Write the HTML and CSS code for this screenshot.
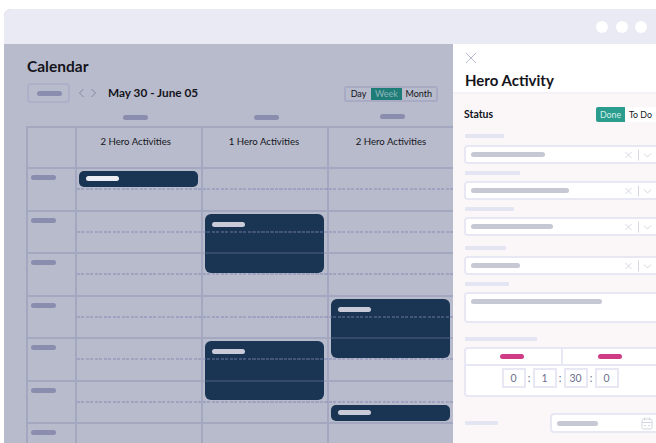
FILE: index.html
```html
<!DOCTYPE html>
<html lang="en">
<head>
<meta charset="utf-8">
<title>Calendar</title>
<link rel="stylesheet" href="styles.css">
</head>
<body>
<div class="window">
  <header class="titlebar">
    <span class="dot"></span><span class="dot"></span><span class="dot"></span>
  </header>
  <div class="workspace">
    <main class="calendar">
      <h1 class="cal-title">Calendar</h1>
      <div class="toolbar">
        <button class="today"><span class="pill pill-muted"></span></button>
        <svg class="nav" width="17" height="10" viewBox="0 0 17 10"><path d="M4.500 1 .5 5l4 4M12.500 1l4 4-4 4" /></svg>
        <span class="range">May 30 - June 05</span>
        <div class="views">
          <span class="view view-day">Day</span><span class="view view-week">Week</span><span class="view view-month">Month</span>
        </div>
      </div>
      <div class="day-tabs">
        <span class="day-tab tab-a"><span class="pill pill-muted"></span></span>
        <span class="day-tab tab-b"><span class="pill pill-muted"></span></span>
        <span class="day-tab tab-c"><span class="pill pill-muted"></span></span>
      </div>
      <div class="grid">
        <div class="cell head"></div>
        <div class="cell head day-a">2 Hero Activities</div>
        <div class="cell head day-b">1 Hero Activities</div>
        <div class="cell head">2 Hero Activities</div>

        <div class="cell hour"><span class="pill pill-muted"></span></div>
        <div class="cell slot"><div class="event ev-short"><span class="pill pill-event pill-bright"></span></div></div>
        <div class="cell slot"></div>
        <div class="cell slot"></div>

        <div class="cell hour"><span class="pill pill-muted"></span></div>
        <div class="cell slot"></div>
        <div class="cell slot"><div class="event ev-long"><span class="pill pill-event"></span></div></div>
        <div class="cell slot"></div>

        <div class="cell hour"><span class="pill pill-muted"></span></div>
        <div class="cell slot"></div>
        <div class="cell slot"></div>
        <div class="cell slot"></div>

        <div class="cell hour"><span class="pill pill-muted"></span></div>
        <div class="cell slot"></div>
        <div class="cell slot"></div>
        <div class="cell slot"><div class="event ev-long"><span class="pill pill-event"></span></div></div>

        <div class="cell hour"><span class="pill pill-muted"></span></div>
        <div class="cell slot"></div>
        <div class="cell slot"><div class="event ev-long"><span class="pill pill-event"></span></div></div>
        <div class="cell slot"></div>

        <div class="cell hour"><span class="pill pill-muted"></span></div>
        <div class="cell slot"></div>
        <div class="cell slot"></div>
        <div class="cell slot"><div class="event ev-short ev-late"><span class="pill pill-event"></span></div></div>

        <div class="cell hour"><span class="pill pill-muted"></span></div>
        <div class="cell slot"></div>
        <div class="cell slot"></div>
        <div class="cell slot"></div>
      </div>
    </main>

    <aside class="panel">
      <div class="panel-head">
        <svg class="close" width="12" height="12" viewBox="0 0 12 12"><path d="M1 1l10 10M11 1 1 11" /></svg>
        <h2 class="panel-title">Hero Activity</h2>
      </div>
      <div class="panel-body">
        <div class="status">
          <span class="status-label">Status</span>
          <div class="toggle"><span class="toggle-on">Done</span><span class="toggle-off">To Do</span></div>
        </div>

        <span class="label w-39"></span>
        <div class="field">
          <span class="pill pill-field w-74"></span>
          <svg class="controls" width="30" height="12" viewBox="0 0 30 12"><path d="M.5 3l6 6M6.500 3l-6 6" /><path class="sep" d="M13.500 .5v11" /><path d="M19 4.500l3.500 3.500L26 4.500" /></svg>
        </div>

        <span class="label w-55 gap-s"></span>
        <div class="field field-tight">
          <span class="pill pill-field w-98"></span>
          <svg class="controls" width="30" height="12" viewBox="0 0 30 12"><path d="M.5 3l6 6M6.500 3l-6 6" /><path class="sep" d="M13.500 .5v11" /><path d="M19 4.500l3.500 3.500L26 4.500" /></svg>
        </div>

        <span class="label w-49 gap-s"></span>
        <div class="field field-tight">
          <span class="pill pill-field w-82"></span>
          <svg class="controls" width="30" height="12" viewBox="0 0 30 12"><path d="M.5 3l6 6M6.500 3l-6 6" /><path class="sep" d="M13.500 .5v11" /><path d="M19 4.500l3.500 3.500L26 4.500" /></svg>
        </div>

        <span class="label w-41 gap-m"></span>
        <div class="field field-tight">
          <span class="pill pill-field w-49"></span>
          <svg class="controls" width="30" height="12" viewBox="0 0 30 12"><path d="M.5 3l6 6M6.500 3l-6 6" /><path class="sep" d="M13.500 .5v11" /><path d="M19 4.500l3.500 3.500L26 4.500" /></svg>
        </div>

        <span class="label w-44 gap-s"></span>
        <div class="textarea field-tight">
          <span class="pill pill-field w-131"></span>
        </div>

        <span class="label w-72 gap-l"></span>
        <div class="duration field-tight">
          <div class="duration-tabs">
            <div class="duration-tab"><span class="pill pill-pink"></span></div>
            <div class="duration-tab"><span class="pill pill-pink"></span></div>
          </div>
          <div class="duration-inputs">
            <span class="num">0</span><span class="colon">:</span>
            <span class="num">1</span><span class="colon">:</span>
            <span class="num">30</span><span class="colon">:</span>
            <span class="num">0</span>
          </div>
        </div>

        <div class="date-row">
          <span class="label w-33"></span>
          <div class="date-input">
            <span class="pill pill-field w-41"></span>
            <svg class="cal-icon" width="12" height="13" viewBox="0 0 12 13"><rect x="1" y="2" width="10" height="10" rx="1.500" /><path d="M1 5.500h10M3.500 .5v3M8.500 .5v3M3 8.500h2M7 8.500h2" /></svg>
          </div>
        </div>
      </div>
    </aside>
  </div>
</div>
</body>
</html>
```
FILE: styles.css
```css
* { box-sizing: border-box; }

html, body {
  margin: 0;
  height: 100%;
  background: #fff;
  overflow: hidden;
}

body {
  padding: 9px 0 0 4px;
  font-family: "Lato", "Open Sans", sans-serif;
  color: #14141c;
}

.window {
  height: 434px;
  display: flex;
  flex-direction: column;
  border-top-left-radius: 7px;
  overflow: hidden;
  background: #b8bbcb;
}

.titlebar {
  flex: 0 0 35px;
  background: #e9eaf4;
  display: flex;
  align-items: center;
  justify-content: flex-end;
  gap: 7.500px;
  padding: 0 9px 0 0;
}

.dot {
  width: 12px;
  height: 12px;
  border-radius: 50%;
  background: #fff;
}

.workspace {
  flex: 1;
  display: flex;
  min-height: 0;
}

/* Shared placeholder bars */
.pill {
  display: block;
  height: 5px;
  border-radius: 3px;
}

.pill-muted { width: 25px; background: #8b8dae; }
.pill-event { width: 33px; background: #c9ccd8; }
.pill-bright { background: #eceef3; }
.pill-field { background: #c6c8d3; }
.pill-pink { width: 24px; background: #cf3c85; }

/* Calendar side */
.calendar {
  flex: 0 0 449px;
  min-width: 0;
  overflow: hidden;
  padding: 13px 0 0 22px;
}

.cal-title {
  margin: 0 0 0 1px;
  font-size: 15.500px;
  line-height: 19px;
  font-weight: 700;
}

.toolbar {
  display: flex;
  align-items: center;
  height: 20px;
  margin: 7px 0 0 1px;
}

.today {
  width: 43px;
  height: 20px;
  padding: 0 0 0 8px;
  background: transparent;
  border: 2px solid #adb0c9;
  border-radius: 4px;
}

.nav {
  margin-left: 9px;
  fill: none;
  stroke: #84869f;
  stroke-width: 1;
}

.range {
  margin: 0 0 2px 12px;
  font-size: 11.800px;
  font-weight: 700;
  white-space: nowrap;
}

.views {
  margin: 2px 15.500px 0 auto;
  display: flex;
  height: 16px;
  border: 2px solid #a9abc5;
  border-radius: 2px;
  font-size: 9px;
  line-height: 12px;
  text-align: center;
}

.view-day { width: 25px; }
.view-week { width: 31px; background: #1f7d78; color: #8db6bb; }
.view-month { width: 33.500px; }

.day-tabs {
  display: grid;
  grid-template-columns: 51px 126px 126px 126px;
  height: 13px;
  margin-top: 10px;
}

.day-tab { padding-top: 2px; }
.tab-a { grid-column: 2; padding-left: 46px; }
.tab-b { padding-left: 51px; }
.tab-c { padding-left: 51px; padding-top: 1px; }

/* Isolated so events can sit beneath the ruled lines of their cells */
.grid {
  isolation: isolate;
  display: grid;
  grid-template-columns: 49px 126px 126px 126px;
  grid-template-rows: 41px repeat(7, 42.500px);
  width: 429px;
  border-top: 2px solid rgba(120, 122, 170, .3);
  border-left: 2px solid rgba(120, 122, 170, .3);
}

.cell {
  position: relative;
  border-right: 2px solid rgba(120, 122, 170, .3);
  border-bottom: 2px solid rgba(120, 122, 170, .3);
}

.head {
  padding-top: 7px;
  font-size: 9.600px;
  line-height: 14px;
  text-align: center;
  white-space: nowrap;
}

.day-a { padding-right: 6.500px; }
.day-b { padding-right: 2px; }

.hour { padding: 6px 0 0 3px; }

.slot::after {
  content: "";
  position: absolute;
  left: 0;
  right: -2px;
  top: 19px;
  height: 2px;
  background: repeating-linear-gradient(90deg, rgba(125, 130, 175, .42) 0 3px, transparent 3px 4.500px);
}

.event {
  position: absolute;
  z-index: -1;
  top: 2px;
  left: 2px;
  right: 3.500px;
  background: #193553;
}

.ev-short {
  height: 15.500px;
  padding: 5px 0 0 7px;
  border-radius: 5px;
}

.ev-late { top: 23.500px; }

.ev-long {
  height: 59px;
  padding: 8px 0 0 7px;
  border-radius: 6px;
}

/* Detail panel */
.panel {
  flex: 1;
  min-width: 0;
  overflow: hidden;
  background: #fbf7f9;
  display: flex;
  flex-direction: column;
}

.panel-head {
  flex: 0 0 50px;
  background: #fff;
  border-bottom: 2px solid #f2f2f8;
  padding: 8px 0 0 12px;
}

.close {
  display: block;
  fill: none;
  stroke: #b9bbd3;
  stroke-width: 1;
}

.panel-title {
  margin: 6px 0 0;
  font-size: 15px;
  line-height: 20px;
  font-weight: 700;
}

.panel-body {
  padding: 13px 0 0 11px;
}

.status {
  display: flex;
  align-items: center;
  justify-content: space-between;
  height: 15px;
  width: 192px;
}

.status-label {
  margin-bottom: 2px;
  font-size: 10.500px;
  font-weight: 700;
}

.toggle {
  display: flex;
  height: 15px;
  font-size: 8.800px;
  line-height: 15px;
}

.toggle-on {
  width: 29px;
  text-align: center;
  background: #2a9d8f;
  color: #d3efe9;
  border-radius: 2px 0 0 2px;
}

.toggle-off {
  width: 31px;
  text-align: center;
  background: #fff;
}

.label {
  display: block;
  height: 4px;
  margin: 12px 0 0 1px;
  border-radius: 1px;
  background: #e3e5f2;
}

.gap-s { margin-top: 7px; }
.gap-m { margin-top: 10px; }
.gap-l { margin-top: 14px; }

.w-33 { width: 33px; }
.w-39 { width: 39px; }
.w-41 { width: 41px; }
.w-44 { width: 44px; }
.w-49 { width: 49px; }
.w-55 { width: 55px; }
.w-72 { width: 72px; }
.w-74 { width: 74px; }
.w-82 { width: 82px; }
.w-98 { width: 98px; }
.w-131 { width: 131px; }

.field,
.textarea,
.duration,
.date-input {
  background: #fff;
  border: 2px solid #e7e8f4;
  border-radius: 4px;
}

.field {
  display: flex;
  align-items: center;
  justify-content: space-between;
  width: 196px;
  height: 19px;
  margin-top: 7px;
  padding: 0 3.500px 0 5px;
}

.field-tight { margin-top: 6px; }

.controls {
  fill: none;
  stroke: #d5d7e2;
  stroke-width: 1;
}

.textarea {
  width: 196px;
  height: 31px;
  padding: 5px 0 0 5px;
}

.duration {
  width: 196px;
  height: 50px;
}

.duration-tabs {
  display: flex;
  height: 17px;
  border-bottom: 2px solid #e7e8f4;
}

.duration-tab {
  flex: 0 0 95px;
  padding: 5px 0 0 34px;
}

.duration-tab + .duration-tab {
  padding-left: 35px;
  border-left: 2px solid #e7e8f4;
}

.duration-inputs {
  display: flex;
  align-items: flex-start;
  justify-content: center;
  width: 188px;
  padding-top: 2px;
  font-size: 10.500px;
  color: #6c6f8c;
}

.num {
  width: 24px;
  height: 20px;
  line-height: 16px;
  text-align: center;
  border: 2px solid #e7e8f4;
}

.colon {
  width: 7px;
  line-height: 20px;
  text-align: center;
}

.date-row {
  display: flex;
  align-items: center;
  justify-content: space-between;
  width: 196px;
  margin-top: 16px;
}

.date-row .label { margin: 0 0 0 1px; }

.date-input {
  display: flex;
  align-items: center;
  justify-content: space-between;
  width: 110px;
  height: 20px;
  padding: 0 5px;
}

.cal-icon {
  fill: none;
  stroke: #d3d5e0;
  stroke-width: 1;
}
```
